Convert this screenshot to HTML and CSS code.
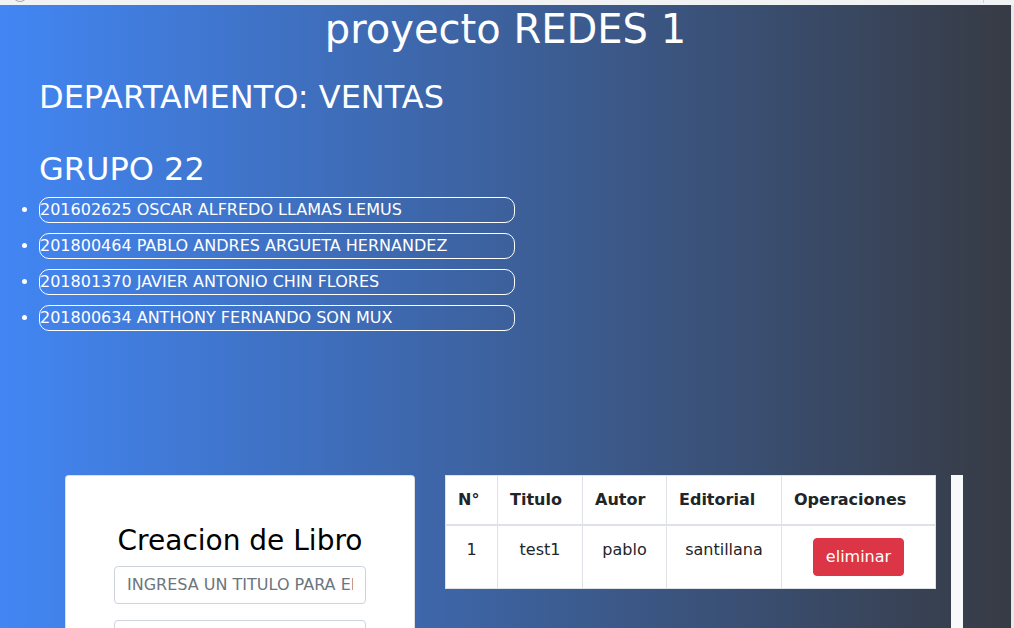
FILE: index.html
```html
<!DOCTYPE html>
<html lang="es">
<head>
<meta charset="utf-8">
<title>proyecto REDES 1</title>
<link rel="stylesheet" href="styles.css">
</head>
<body>
<div class="chrome"><span class="chrome-circle"></span><span class="chrome-tick"></span></div>
<div class="page">
  <main class="stage">
    <h1 class="title">proyecto REDES 1</h1>
    <h2 class="dept">DEPARTAMENTO: VENTAS</h2>
    <h2 class="group">GRUPO 22</h2>
    <ul class="members">
      <li>201602625 OSCAR ALFREDO LLAMAS LEMUS</li>
      <li>201800464 PABLO ANDRES ARGUETA HERNANDEZ</li>
      <li>201801370 JAVIER ANTONIO CHIN FLORES</li>
      <li>201800634 ANTHONY FERNANDO SON MUX</li>
    </ul>
    <section class="workspace">
      <div class="card">
        <h3 class="card-title">Creacion de Libro</h3>
        <input class="field" type="text" placeholder="INGRESA UN TITULO PARA EL LIBRO">
        <input class="field" type="text" placeholder="INGRESA EL AUTOR DEL LIBRO">
        <input class="field" type="text" placeholder="INGRESA LA EDITORIAL">
      </div>
      <table class="books">
        <thead>
          <tr>
            <th class="c-num">N°</th>
            <th class="c-title">Titulo</th>
            <th class="c-author">Autor</th>
            <th class="c-pub">Editorial</th>
            <th class="c-ops">Operaciones</th>
          </tr>
        </thead>
        <tbody>
          <tr>
            <td>1</td>
            <td>test1</td>
            <td>pablo</td>
            <td>santillana</td>
            <td><button class="btn-delete" type="button">eliminar</button></td>
          </tr>
        </tbody>
      </table>
      <div class="side-strip"></div>
    </section>
  </main>
  <div class="edge"></div>
</div>
</body>
</html>
```
FILE: styles.css
```css
html, body {
  margin: 0;
  padding: 0;
  height: 628px;
  overflow: hidden;
}

body {
  background: #f1f2f4;
  font-family: "DejaVu Sans", sans-serif;
  font-size: 16px;
  line-height: 24px;
}

.chrome {
  position: relative;
  height: 5px;
  background: #f1f2f4;
  overflow: hidden;
}

.chrome-circle {
  position: absolute;
  left: 12px;
  top: -14px;
  width: 14px;
  height: 14px;
  border: 1px solid #a8a8a8;
  border-radius: 50%;
}

.chrome-tick {
  position: absolute;
  left: 983px;
  top: 0;
  width: 1px;
  height: 3px;
  background: #cfd0d4;
}

.page {
  display: flex;
  height: 623px;
}

.stage {
  flex: 1;
  background: linear-gradient(to right, #4286f4, #373b44);
  color: #fff;
  overflow: hidden;
}

.edge {
  width: 3px;
  background: #e8e9ed;
}

.title {
  margin: 0 0 25px;
  font-size: 40px;
  line-height: 48px;
  font-weight: 400;
  text-align: center;
}

.dept,
.group {
  margin: 0;
  padding-left: 39px;
  font-size: 32px;
  line-height: 38px;
  font-weight: 400;
}

.dept {
  margin-bottom: 34px;
}

.group {
  margin-bottom: 9px;
}

.members {
  margin: 0;
  padding-left: 39px;
  list-style: disc;
}

.members li {
  box-sizing: border-box;
  width: 476px;
  height: 26px;
  border: 1px solid #fff;
  border-radius: 10px;
  margin-bottom: 10px;
  line-height: 24px;
}

.workspace {
  display: flex;
  align-items: flex-start;
  margin-top: 144px;
  padding-left: 65px;
}

.card {
  flex: none;
  box-sizing: border-box;
  width: 350px;
  height: 300px;
  padding-top: 48px;
  background: #fff;
  border: 1px solid rgba(0, 0, 0, 0.125);
  border-radius: 4px;
  display: flex;
  flex-direction: column;
  align-items: center;
}

.card-title {
  margin: 0 0 8px;
  font-size: 28px;
  line-height: 33.6px;
  font-weight: 400;
  color: #000;
}

.field {
  flex: none;
  box-sizing: border-box;
  width: 252px;
  height: 38px;
  margin: 0 0 16px;
  padding: 6px 12px;
  border: 1px solid #ced4da;
  border-radius: 4px;
  font-family: "DejaVu Sans", sans-serif;
  font-size: 16px;
  line-height: 24px;
  color: #495057;
  background: #fff;
}

.field::placeholder {
  color: #6c757d;
  opacity: 1;
}

.books {
  flex: none;
  margin-left: 30px;
  width: 490px;
  table-layout: fixed;
  border-collapse: collapse;
  background: #fff;
  color: #212529;
}

.books th,
.books td {
  box-sizing: border-box;
  border: 1px solid #dee2e6;
  padding: 12px;
  line-height: 24px;
}

.books th {
  text-align: left;
  vertical-align: bottom;
  font-weight: 700;
  border-bottom-width: 2px;
  white-space: nowrap;
}

.books td {
  text-align: center;
  vertical-align: top;
}

.c-num { width: 52px; }
.c-title { width: 85px; }
.c-author { width: 84px; }
.c-pub { width: 115px; }
.c-ops { width: 154px; }

.btn-delete {
  height: 38px;
  padding: 6px 12px;
  border: 1px solid #dc3545;
  border-radius: 4px;
  background: #dc3545;
  color: #fff;
  font-family: "DejaVu Sans", sans-serif;
  font-size: 16px;
  line-height: 24px;
}

.side-strip {
  flex: none;
  align-self: stretch;
  width: 12px;
  margin-left: 15px;
  background: #f8f9fa;
}
```
